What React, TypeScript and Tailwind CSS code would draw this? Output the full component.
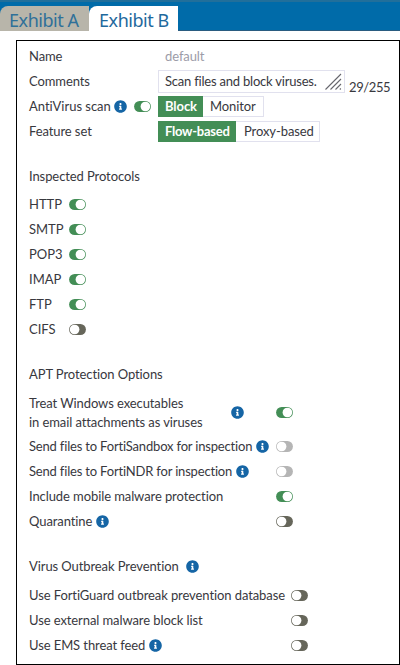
import { FaInfoCircle } from "react-icons/fa";
import clsx from "clsx";

type ToggleState = "on" | "off" | "disabled";

function Toggle({ state, className }: { state: ToggleState; className?: string }) {
  const on = state === "on";
  const color = on ? "#438e56" : state === "disabled" ? "#b5b5b5" : "#66665a";
  return (
    <svg width="17" height="11" viewBox="0 0 17 11" className={clsx("shrink-0", className)}>
      <rect x="0.1" y="0" width="16.8" height="11" rx="5.5" fill={color} />
      <circle cx={on ? 11.4 : 5.6} cy="5.5" r="4.8" fill="#fff" />
    </svg>
  );
}

function Info({ className }: { className?: string }) {
  return <FaInfoCircle className={clsx("mb-px size-[13px] shrink-0 text-[#1565a5]", className)} />;
}

const protocols: { name: string; state: ToggleState }[] = [
  { name: "HTTP", state: "on" },
  { name: "SMTP", state: "on" },
  { name: "POP3", state: "on" },
  { name: "IMAP", state: "on" },
  { name: "FTP", state: "on" },
  { name: "CIFS", state: "off" },
];

const aptOptions: { name: string; info?: boolean; state: ToggleState }[] = [
  { name: "Send files to FortiSandbox for inspection", info: true, state: "disabled" },
  { name: "Send files to FortiNDR for inspection", info: true, state: "disabled" },
  { name: "Include mobile malware protection", state: "on" },
  { name: "Quarantine", info: true, state: "off" },
];

const outbreakOptions: { name: string; info?: boolean }[] = [
  { name: "Use FortiGuard outbreak prevention database" },
  { name: "Use external malware block list" },
  { name: "Use EMS threat feed", info: true },
];

export default function App() {
  return (
    <div className="h-[665px] w-[400px] overflow-hidden bg-white font-['Lato',sans-serif] text-[13px] leading-[19px] tracking-[-0.09px] whitespace-nowrap text-[#38383e]">
      <div className="flex h-[31px] items-end border-t-2 border-b border-t-[#216f9b] border-b-[#2a5c80] bg-[#006ba9] font-['Noto_Sans',sans-serif] text-[18px] tracking-[-0.45px]">
        <div className="-mb-px h-[25px] w-[89px] rounded-tl-[8px] bg-[#b8b5aa] pl-[9px] leading-[28px] text-[#2f7099]">
          Exhibit A
        </div>
        <div className="-mb-px h-[25px] w-[89px] rounded-tl-[8px] bg-white pl-[10px] leading-[28px] text-[#1e699d]">
          Exhibit B
        </div>
      </div>

      <div className="mt-[9px] ml-[16px] h-[625px] border border-black pt-[3px] pl-[12px]">
        <div className="flex h-[25px] items-center">
          <span className="w-[136px]">Name</span>
          <span className="text-[#9c9ca8]">default</span>
        </div>
        <div className="flex h-[25px] items-center">
          <span className="w-[129px]">Comments</span>
          <div className="flex h-[23px] w-[187px] items-center justify-between border border-[#e1e1ee] pr-[2px] pl-[6px]">
            <span className="tracking-[-0.21px]">Scan files and block viruses.</span>
            <svg width="17" height="17" viewBox="0 0 17 17" stroke="#66666c" strokeWidth="1.1">
              <path d="M0.5 16.5 16 1M5.5 16.5 16 6M10.5 16.5 16 11M14.8 16.5l1-1" />
            </svg>
          </div>
          <span className="mt-[11px] ml-[4px] tracking-[-0.4px]">29/255</span>
        </div>
        <div className="flex h-[25px] items-center">
          <div className="flex w-[129px] items-center">
            <span className="w-[85px] tracking-[-0.03px]">AntiVirus scan</span>
            <Info />
            <Toggle state="on" className="mb-px ml-[7px]" />
          </div>
          <div className="flex h-[21px] items-center">
            <span className="h-[21px] w-[45px] bg-[#438e56] pl-[7px] leading-[21px] font-bold text-white">Block</span>
            <span className="h-[21px] w-[61px] border border-l-0 border-[#e1e1ee] pl-[7px]">Monitor</span>
          </div>
        </div>
        <div className="flex h-[25px] items-center">
          <span className="w-[129px]">Feature set</span>
          <div className="flex h-[21px] items-center">
            <span className="h-[21px] w-[78px] bg-[#438e56] pl-[7px] leading-[21px] font-bold tracking-[-0.25px] text-white">
              Flow-based
            </span>
            <span className="h-[21px] w-[84px] border border-l-0 border-[#e1e1ee] pl-[8px]">Proxy-based</span>
          </div>
        </div>

        <div className="mt-[20px] flex h-[24px] items-center">Inspected Protocols</div>
        <div className="mt-[4px]">
          {protocols.map((p) => (
            <div key={p.name} className="flex h-[25px] items-center tracking-normal">
              <span className="w-[40px]">{p.name}</span>
              <Toggle state={p.state} className="mb-px" />
            </div>
          ))}
        </div>

        <div className="mt-[20px] flex h-[25px] items-center">APT Protection Options</div>
        <div className="mt-[6px] flex h-[40px] items-center">
          <div className="w-[202px] leading-[19px]">
            <p>Treat Windows executables</p>
            <p>in email attachments as viruses</p>
          </div>
          <Info className="mb-[3px]" />
          <Toggle state="on" className="mb-[2px] ml-[32px]" />
        </div>
        <div className="mt-px">
          {aptOptions.map((o) => (
            <div key={o.name} className="flex h-[25px] items-center">
              <div className="flex w-[247px] items-center gap-[4px]">
                <span className={clsx(o.state === "disabled" && "tracking-[-0.18px]")}>{o.name}</span>
                {o.info && <Info />}
              </div>
              <Toggle state={o.state} className="mb-px" />
            </div>
          ))}
        </div>

        <div className="mt-[20px] flex h-[25px] items-center gap-[7px]">
          <span>Virus Outbreak Prevention</span>
          <Info />
        </div>
        <div className="mt-[4px]">
          {outbreakOptions.map((o) => (
            <div key={o.name} className="flex h-[25px] items-center">
              <div className="flex w-[262px] items-center gap-[4px]">
                <span>{o.name}</span>
                {o.info && <Info />}
              </div>
              <Toggle state="off" className="mb-px" />
            </div>
          ))}
        </div>
      </div>
    </div>
  );
}
